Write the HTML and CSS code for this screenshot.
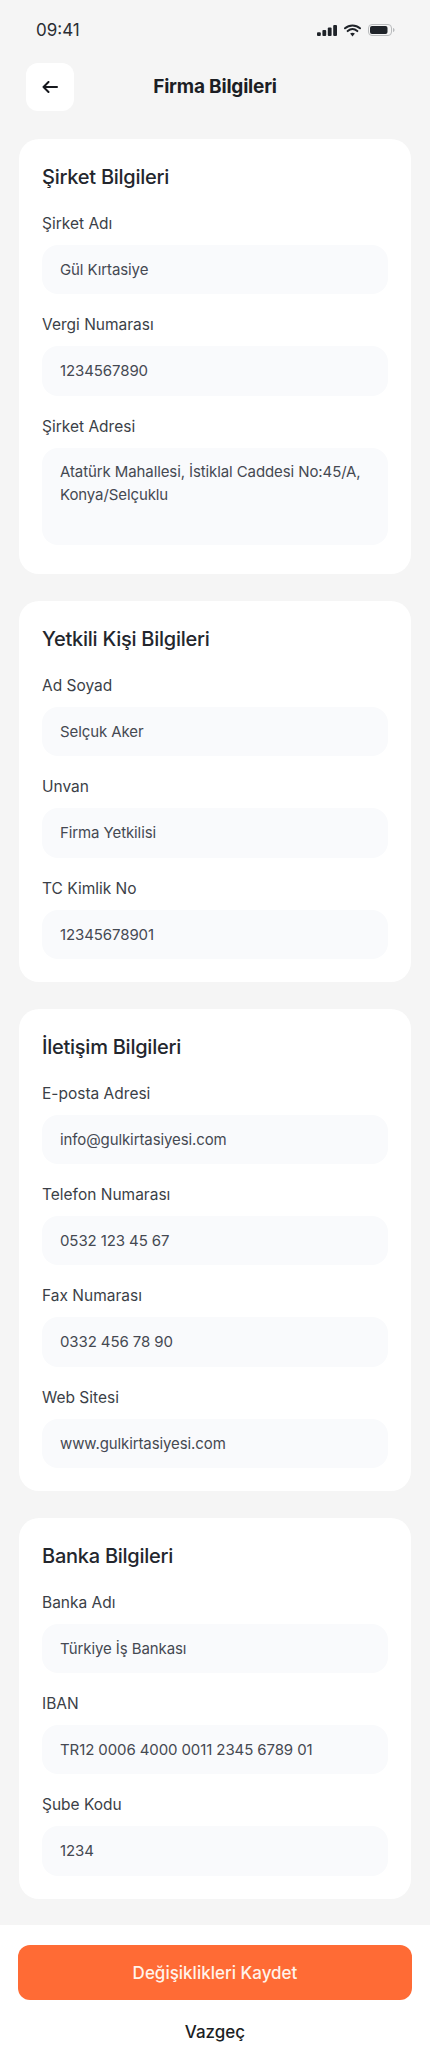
FILE: index.html
```html
<!DOCTYPE html>
<html lang="tr">
<head>
<meta charset="utf-8">
<title>Firma Bilgileri</title>
<link rel="stylesheet" href="styles.css">
</head>
<body>
<div class="screen">
  <div class="status">
    <span class="time">09:41</span>
    <span class="status-icons">
      <svg width="20" height="11" viewBox="0 0 20 11"><rect x="0" y="7.200" width="3.800" height="3.800" rx="1" fill="#1f2329"/><rect x="5.400" y="5" width="3.800" height="6" rx="1" fill="#1f2329"/><rect x="10.800" y="2.500" width="3.800" height="8.500" rx="1" fill="#1f2329"/><rect x="16.200" y="0" width="3.800" height="11" rx="1" fill="#1f2329"/></svg>
      <svg width="17" height="13" viewBox="0 0 17 13"><path d="M1 4.300C5.300.4 11.700.4 16 4.300M3.700 7.100c2.900-2.500 6.700-2.500 9.600 0" fill="none" stroke="#1f2329" stroke-width="2" stroke-linecap="round"/><path d="M6.100 9.500c1.500-1 3.300-1 4.800 0L8.500 12.400z" fill="#1f2329"/></svg>
      <svg width="27" height="12" viewBox="0 0 27 12"><rect x=".5" y=".5" width="23" height="11" rx="3.500" fill="none" stroke="#b9bbbd"/><rect x="2" y="2" width="17.500" height="8" rx="2" fill="#1f2329"/><path d="M25 4c1 .3 1.500 1.100 1.500 2s-.5 1.700-1.500 2z" fill="#b9bbbd"/></svg>
    </span>
  </div>
  <header class="topbar">
    <button class="back" aria-label="Geri">
      <svg width="16" height="12" viewBox="0 0 16 12"><path d="M15 6H1.500M6.500 1 1.500 6l5 5" fill="none" stroke="#16181d" stroke-width="2" stroke-linecap="round" stroke-linejoin="round"/></svg>
    </button>
    <h1 class="page-title">Firma Bilgileri</h1>
  </header>
  <main class="content">
    <section class="card">
      <h2 class="card-title">Şirket Bilgileri</h2>
      <div class="field"><label class="label">Şirket Adı</label><div class="input">Gül Kırtasiye</div></div>
      <div class="field"><label class="label">Vergi Numarası</label><div class="input">1234567890</div></div>
      <div class="field"><label class="label">Şirket Adresi</label><div class="input area">Atatürk Mahallesi, İstiklal Caddesi No:45/A, Konya/Selçuklu</div></div>
    </section>
    <section class="card">
      <h2 class="card-title">Yetkili Kişi Bilgileri</h2>
      <div class="field"><label class="label">Ad Soyad</label><div class="input">Selçuk Aker</div></div>
      <div class="field"><label class="label">Unvan</label><div class="input">Firma Yetkilisi</div></div>
      <div class="field"><label class="label">TC Kimlik No</label><div class="input">12345678901</div></div>
    </section>
    <section class="card">
      <h2 class="card-title">İletişim Bilgileri</h2>
      <div class="field"><label class="label">E-posta Adresi</label><div class="input">info@gulkirtasiyesi.com</div></div>
      <div class="field"><label class="label">Telefon Numarası</label><div class="input">0532 123 45 67</div></div>
      <div class="field"><label class="label">Fax Numarası</label><div class="input">0332 456 78 90</div></div>
      <div class="field"><label class="label">Web Sitesi</label><div class="input">www.gulkirtasiyesi.com</div></div>
    </section>
    <section class="card">
      <h2 class="card-title">Banka Bilgileri</h2>
      <div class="field"><label class="label">Banka Adı</label><div class="input">Türkiye İş Bankası</div></div>
      <div class="field"><label class="label">IBAN</label><div class="input">TR12 0006 4000 0011 2345 6789 01</div></div>
      <div class="field"><label class="label">Şube Kodu</label><div class="input">1234</div></div>
    </section>
  </main>
  <footer class="footer">
    <button class="save">Değişiklikleri Kaydet</button>
    <button class="cancel">Vazgeç</button>
  </footer>
</div>
</body>
</html>
```
FILE: styles.css
```css
* { box-sizing: border-box; }
html, body { margin: 0; padding: 0; }
body { background: #f5f5f5; font-family: "Inter", "Noto Sans", sans-serif; color: #1f2329; }
.screen { width: 430px; height: 2071px; display: flex; flex-direction: column; }
.status { height: 62px; padding: 19px 35px 0 36px; display: flex; justify-content: space-between; align-items: flex-start; }
.time { font-size: 17px; line-height: 22px; color: #2a2d33; }
.status-icons { display: flex; align-items: center; gap: 7px; height: 22px; }
.topbar { height: 48px; margin-top: 1px; padding: 0 26px; position: relative; display: flex; align-items: center; justify-content: center; }
.back { position: absolute; left: 26px; top: 0; width: 48px; height: 48px; border: 0; border-radius: 12px; background: #fff; display: flex; align-items: center; justify-content: center; padding: 0; }
.page-title { margin: 0; font-size: 19px; line-height: 28px; font-weight: 700; color: #1c1e24; letter-spacing: -.2px; }
.content { padding: 28px 19px 26px; display: flex; flex-direction: column; gap: 27px; flex: 1; }
.card { background: #fff; border-radius: 20px; padding: 24px 23px 23px; display: flex; flex-direction: column; gap: 21px; }
.card-title { margin: 0 0 2px; font-size: 20px; line-height: 28px; font-weight: 500; color: #23262d; letter-spacing: -.25px; }
.field { display: flex; flex-direction: column; gap: 11px; }
.label { font-size: 15.5px; line-height: 20px; color: #3b3f47; }
.input { height: 49.25px; padding: 0 18px; border-radius: 16px; background: #f9fafc; font-size: 15px; line-height: 49px; color: #454952; letter-spacing: -.1px; }
.input.area { height: 97px; line-height: 23px; padding-top: 12px; margin-bottom: 6.5px; }
.footer { height: 146px; background: #fff; padding: 20px 18px 0; display: flex; flex-direction: column; align-items: stretch; }
.save { height: 55px; border: 0; border-radius: 12px; background: #ff6b35; color: #fff3ea; font: 500 17px/24px "Inter", sans-serif; }
.cancel { margin-top: 19px; height: 24px; border: 0; background: none; color: #1c1e24; font: 500 17px/24px "Inter", sans-serif; }
```
